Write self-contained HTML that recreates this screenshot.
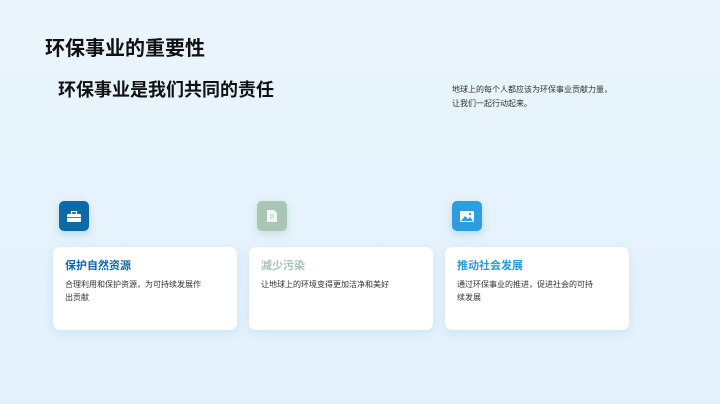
<!DOCTYPE html>
<html><head><meta charset="utf-8"><style>
*{margin:0;padding:0;box-sizing:border-box}
body{width:720px;height:404px;overflow:hidden;background:linear-gradient(180deg,#eaf5fc 0%,#e2f1fb 100%);font-family:"Liberation Sans","Noto Sans CJK SC",sans-serif;position:relative;color:#111}
.abs{position:absolute}
h1{position:absolute;left:45px;top:32px;font-size:20px;font-weight:bold;color:#111}
h2{position:absolute;left:58px;top:76px;font-size:18px;font-weight:bold;color:#111}
.rt{left:452px;top:83px;font-size:8px;line-height:14px;color:#333;width:200px}
.icon{width:30px;height:30px;border-radius:5px;top:201px;display:flex;align-items:center;justify-content:center;box-shadow:0 3px 8px rgba(80,150,200,.3)}
.card{top:247px;width:184px;height:83px;background:#fff;border-radius:7px;box-shadow:0 3px 10px rgba(120,170,210,.2);padding:12px 12px}
.card b{display:block;font-size:11px;line-height:15px;margin-bottom:4px}
.card p{font-size:8px;line-height:13px;color:#333}
</style></head><body>
<h1>环保事业的重要性</h1>
<h2>环保事业是我们共同的责任</h2>
<div class="abs rt">地球上的每个人都应该为环保事业贡献力量，<br>让我们一起行动起来。</div>

<div class="abs icon" style="left:59px;background:#0e6aa6"><svg width="14" height="11" viewBox="0 0 14 11"><rect x="4.5" y="0.5" width="5" height="3" fill="none" stroke="#fff" stroke-width="1.2"/><rect x="0" y="3" width="14" height="8" rx="1" fill="#fff"/><rect x="0" y="6" width="14" height="0.8" fill="#0e6aa6"/></svg></div>
<div class="abs icon" style="left:257px;background:#a9c5b3;box-shadow:0 3px 8px rgba(120,160,140,.25)"><svg width="10" height="12" viewBox="0 0 10 12"><path d="M0 0H7L10 3V12H0Z" fill="#f1f6f2"/><text x="3" y="9" font-size="6" fill="#a9c5b3" font-family="Liberation Sans">P</text></svg></div>
<div class="abs icon" style="left:452px;background:#2b9ee0"><svg width="14" height="11" viewBox="0 0 14 11"><rect width="14" height="11" rx="1" fill="#fff"/><path d="M1 10L5 5L8 8L10 6L13 10Z" fill="#2b9ee0"/><circle cx="10" cy="3" r="1.2" fill="#2b9ee0"/></svg></div>

<div class="abs card" style="left:53px"><b style="color:#1268a6">保护自然资源</b><p>合理利用和保护资源，为可持续发展作<br>出贡献</p></div>
<div class="abs card" style="left:249px"><b style="color:#a3c4b0">减少污染</b><p>让地球上的环境变得更加洁净和美好</p></div>
<div class="abs card" style="left:445px"><b style="color:#2a9ad8">推动社会发展</b><p>通过环保事业的推进，促进社会的可持<br>续发展</p></div>
</body></html>
